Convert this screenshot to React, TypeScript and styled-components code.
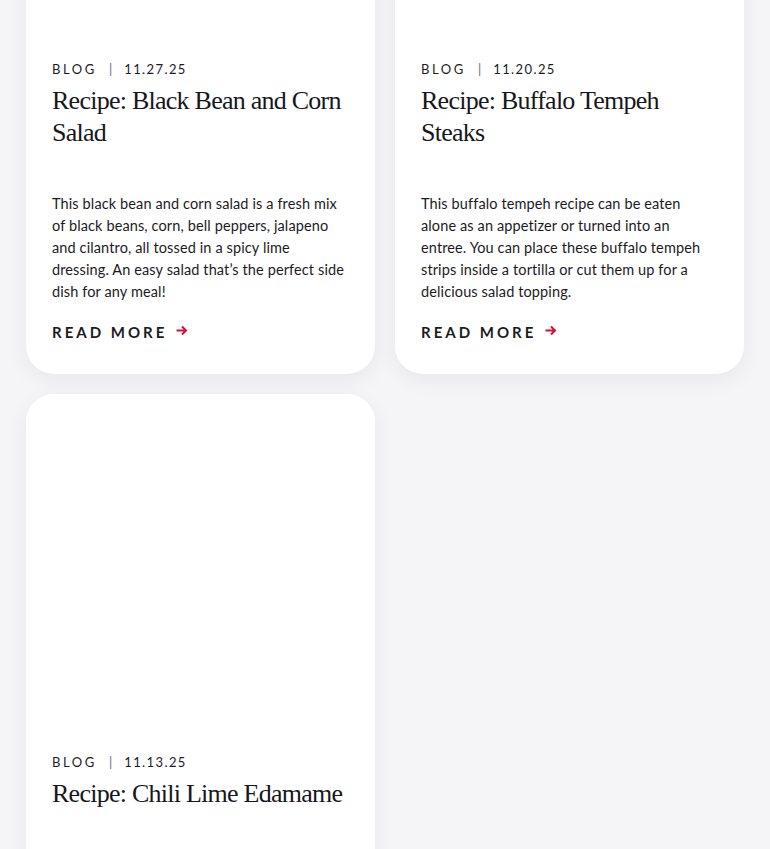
import styled, { createGlobalStyle } from 'styled-components';

const GlobalStyle = createGlobalStyle`
  html, body {
    margin: 0;
    padding: 0;
    background: #f5f5f7;
    overflow: hidden;
  }
  body {
    font-family: 'Lato', 'Liberation Sans', sans-serif;
    color: #1b1b1f;
  }
`;

export default function App() {
  return (
    <>
      <GlobalStyle />
      <StyledPage>
        <StyledGrid>
          {postData.map((post) => (
            <PostCard key={post.title} {...post} />
          ))}
        </StyledGrid>
      </StyledPage>
    </>
  );
}

function PostCard({ date, title, excerpt }) {
  return (
    <StyledCard>
      <StyledImage />
      <StyledBody>
        <StyledMeta>
          <span>Blog</span>
          <StyledPipe>|</StyledPipe>
          <StyledDate>{date}</StyledDate>
        </StyledMeta>
        <StyledTitle>{title}</StyledTitle>
        {excerpt && <StyledExcerpt>{excerpt}</StyledExcerpt>}
        {excerpt && (
          <StyledReadMore href="#">
            Read More
            <ArrowIcon />
          </StyledReadMore>
        )}
      </StyledBody>
    </StyledCard>
  );
}

function ArrowIcon() {
  return (
    <svg width="12" height="11" viewBox="0 0 12 11" fill="none">
      <path
        d="M0.5 5.5h9.5M6 1.5l4 4-4 4"
        stroke="#d4103c"
        strokeWidth="2"
      />
    </svg>
  );
}

/** Data **/
const postData = [
  {
    date: '11.27.25',
    title: 'Recipe: Black Bean and Corn Salad',
    excerpt:
      'This black bean and corn salad is a fresh mix of black beans, corn, bell peppers, jalapeno and cilantro, all tossed in a spicy lime dressing. An easy salad that’s the perfect side dish for any meal!',
  },
  {
    date: '11.20.25',
    title: 'Recipe: Buffalo Tempeh Steaks',
    excerpt:
      'This buffalo tempeh recipe can be eaten alone as an appetizer or turned into an entree. You can place these buffalo tempeh strips inside a tortilla or cut them up for a delicious salad topping.',
  },
  {
    date: '11.13.25',
    title: 'Recipe: Chili Lime Edamame',
    excerpt: '',
  },
];

const StyledPage = styled.main`
  /* page is scrolled: first row starts above the viewport */
  margin-top: -299px;
  padding: 0 26px;
`;

const StyledGrid = styled.div`
  display: grid;
  grid-template-columns: repeat(2, 349px);
  gap: 20px;
`;

const StyledCard = styled.article`
  background: #fff;
  border-radius: 28px;
  box-shadow: 0 6px 22px rgba(20, 20, 40, 0.06);
  overflow: hidden;
  display: flex;
  flex-direction: column;
`;

const StyledImage = styled.div`
  height: 332px;
  background: #fff;
`;

const StyledBody = styled.div`
  padding: 26px 26px 32px;
`;

const StyledMeta = styled.div`
  display: flex;
  align-items: center;
  gap: 12px;
  font-size: 13px;
  line-height: 20px;
  letter-spacing: 2.6px;
  text-transform: uppercase;
  color: #1b1b1f;
`;

const StyledDate = styled.span`
  letter-spacing: 1.4px;
`;

const StyledPipe = styled.span`
  color: #6b6b70;
  letter-spacing: 0;
`;

const StyledTitle = styled.h2`
  margin: 6px 0 0;
  min-height: 96px;
  font-family: 'Liberation Serif', 'DejaVu Serif', serif;
  font-weight: 400;
  font-size: 26px;
  line-height: 32px;
  letter-spacing: -0.75px;
  color: #17171b;
`;

const StyledExcerpt = styled.p`
  margin: 12px 0 0;
  font-size: 14.5px;
  line-height: 22px;
  letter-spacing: 0.12px;
  color: #1b1b1f;
`;

const StyledReadMore = styled.a`
  display: inline-flex;
  align-items: center;
  gap: 9px;
  margin-top: 19px;
  font-size: 15px;
  line-height: 20px;
  font-weight: 700;
  letter-spacing: 3px;
  text-transform: uppercase;
  text-decoration: none;
  color: #1b1b1f;

  svg {
    margin-top: -3px;
  }
`;
